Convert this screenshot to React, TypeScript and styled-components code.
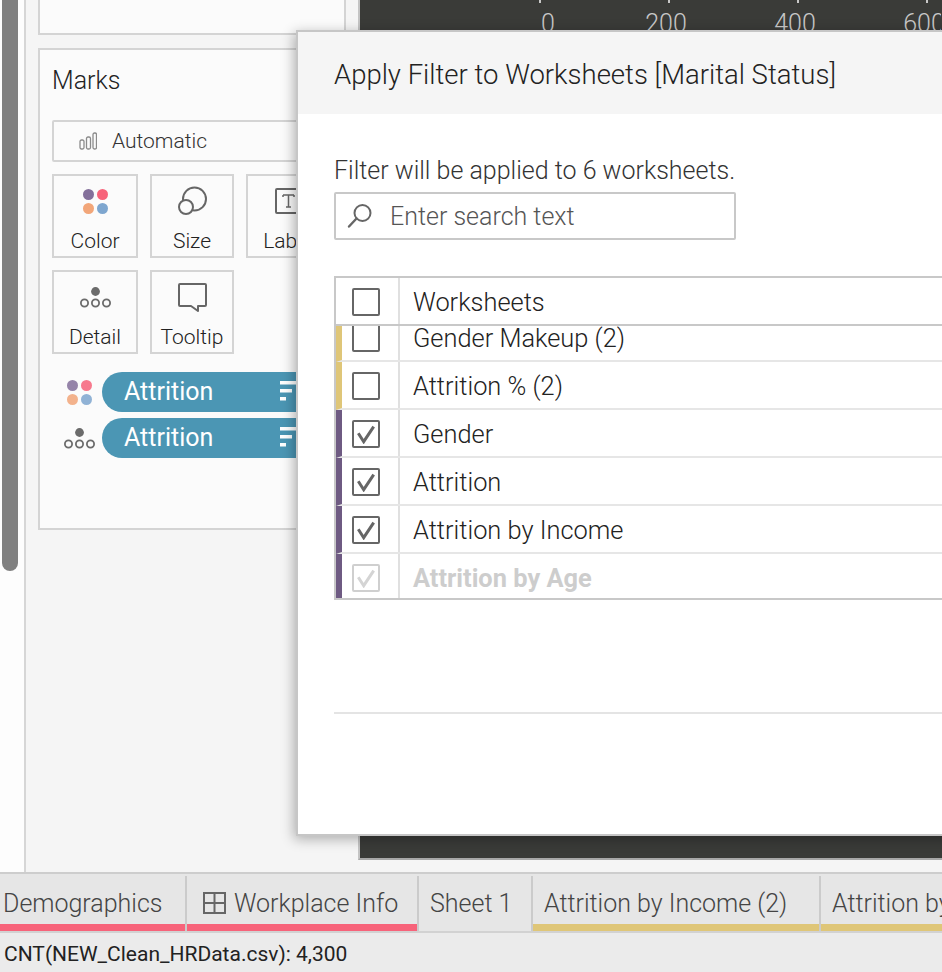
import { createGlobalStyle, styled } from 'styled-components'

const GlobalStyle = createGlobalStyle`
  html, body {
    margin: 0;
    padding: 0;
    background: #f5f5f5;
  }
  * {
    box-sizing: border-box;
  }
  #root {
    width: 942px;
    height: 972px;
    overflow: hidden;
  }
`

const Page = styled.div`
  position: relative;
  width: 942px;
  height: 972px;
  overflow: hidden;
  display: flex;
  flex-direction: column;
  font-family: Roboto, 'Liberation Sans', sans-serif;
  font-weight: 300;
  color: #222;
`

const Workspace = styled.div`
  height: 872px;
  display: flex;
  flex-shrink: 0;
`

const ScrollGutter = styled.div`
  width: 26px;
  flex-shrink: 0;
  padding-left: 2px;
  background: #fdfdfd;
  border-right: 2px solid #d6d6d6;
`

const ScrollThumb = styled.div`
  width: 16px;
  height: 571px;
  background: #808080;
  border-radius: 0 0 8px 8px;
`

const SidePanel = styled.div`
  width: 332px;
  flex-shrink: 0;
  padding: 0 12px 0 12px;
  display: flex;
  flex-direction: column;
  gap: 13px;
  background: #f5f5f5;
`

const Card = styled.div`
  width: 308px;
  background: #fbfbfb;
  border: 2px solid #d4d4d4;
`

const TopCard = styled(Card)`
  height: 35px;
  border-top: none;
`

const MarksCard = styled(Card)`
  height: 482px;
  padding: 0 12px;
  overflow: hidden;
`

const MarksTitle = styled.div`
  font-size: 25px;
  line-height: 30px;
  margin-top: 16px;
`

const MarkTypeSelect = styled.div`
  margin-top: 24px;
  width: 330px;
  height: 42px;
  display: flex;
  align-items: center;
  gap: 15px;
  padding-left: 25px;
  font-size: 21px;
  color: #333;
  background: #fbfbfb;
  border: 2px solid #d4d4d4;
  border-radius: 2px;
`

const MarkGrid = styled.div`
  margin-top: 12px;
  display: grid;
  grid-template-columns: 86px 84px 84px;
  grid-auto-rows: 84px;
  gap: 12px;
`

const MarkButton = styled.div`
  display: flex;
  flex-direction: column;
  align-items: center;
  border: 2px solid #d4d4d4;
  padding-top: 10px;
  font-size: 21px;
  line-height: 24px;
  color: #222;
  overflow: hidden;
`

const MarkIcon = styled.div`
  height: 30px;
  margin-bottom: 13px;
  display: flex;
  align-items: center;
  justify-content: center;
`

const PillList = styled.div`
  margin-top: 18px;
  display: flex;
  flex-direction: column;
  gap: 6px;
`

const PillRow = styled.div`
  display: flex;
  align-items: center;
  height: 40px;
`

const PillIcon = styled.div<{ $gap: number }>`
  width: 50px;
  flex-shrink: 0;
  padding-right: ${({ $gap }) => $gap}px;
  display: flex;
  justify-content: flex-end;
`

const Pill = styled.div`
  width: 218px;
  flex-shrink: 0;
  height: 40px;
  padding: 0 0 2px 22px;
  display: flex;
  align-items: center;
  justify-content: space-between;
  background: #4b96b4;
  color: #fff;
  font-size: 25px;
  font-weight: 400;
  border-radius: 20px 0 0 20px;
`

const ChartArea = styled.div`
  flex: 1;
  height: 860px;
  background: #3a3b38;
  border-left: 2px solid #c4c4c4;
  border-bottom: 2px solid #a8a8a8;
`

const Dialog = styled.div`
  position: absolute;
  left: 296px;
  top: 30px;
  width: 700px;
  height: 806px;
  background: #fff;
  border: 2px solid #c6c6c6;
  border-right: none;
  box-shadow: -2px 3px 12px rgba(0, 0, 0, 0.3);
`

const DialogHeader = styled.div`
  height: 82px;
  padding: 2px 0 0 36px;
  display: flex;
  align-items: center;
  background: #f5f5f5;
  font-size: 27.5px;
`

const DialogBody = styled.div`
  padding: 42px 0 0 36px;
`

const HintText = styled.div`
  font-size: 25px;
  line-height: 30px;
  height: 30px;
  color: #333;
`

const SearchBox = styled.div`
  margin-top: 6px;
  width: 402px;
  height: 48px;
  display: flex;
  align-items: center;
  padding-left: 11px;
  gap: 17px;
  border: 2px solid #c8c8c8;
  border-radius: 2px;
  font-size: 25px;
  color: #555;
`

const Table = styled.div`
  margin-top: 36px;
  width: 700px;
  border: 2px solid #c8c8c8;
  border-right: none;
`

const HeaderRow = styled.div`
  height: 48px;
  display: flex;
  border-bottom: 2px solid #c8c8c8;
`

const Row = styled.div<{ $band: string; $height: number; $last?: boolean }>`
  height: ${({ $height }) => $height}px;
  display: flex;
  overflow: hidden;
  border-left: 6px solid ${({ $band }) => $band};
  border-bottom: ${({ $last }) => ($last ? 'none' : '2px solid #e6e6e6')};
`

const CheckCell = styled.div<{ $band?: boolean }>`
  width: ${({ $band }) => ($band ? 58 : 64)}px;
  flex-shrink: 0;
  padding-left: ${({ $band }) => ($band ? 10 : 16)}px;
  padding-top: 10px;
  border-right: 2px solid #e0e0e0;
`

const LabelCell = styled.div<{ $muted?: boolean; $cropped?: boolean }>`
  padding-left: 13px;
  font-size: 25.400px;
  line-height: 30px;
  margin-top: ${({ $cropped }) => ($cropped ? -3 : 9)}px;
  color: ${({ $muted }) => ($muted ? '#cdcdcd' : '#222')};
  font-weight: ${({ $muted }) => ($muted ? 700 : 300)};
`

const Checkbox = styled.div<{ $muted?: boolean; $cropped?: boolean }>`
  width: 28px;
  height: 28px;
  display: flex;
  align-items: center;
  justify-content: center;
  margin-top: ${({ $cropped }) => ($cropped ? -12 : 0)}px;
  border: 2px solid ${({ $muted }) => ($muted ? '#cfcfcf' : '#666')};
  border-radius: 2px;
  background: #fff;
`

const DialogDivider = styled.div`
  margin-top: 112px;
  height: 2px;
  background: #e4e4e4;
`

const TabBar = styled.div`
  height: 61px;
  flex-shrink: 0;
  display: flex;
  background: #e6e6e6;
  border-top: 2px solid #cdcdcd;
  border-bottom: 2px solid #d2d2d2;
  overflow: hidden;
`

const Tab = styled.div<{ $width: number; $accent?: string; $padding: number }>`
  width: ${({ $width }) => $width}px;
  flex-shrink: 0;
  height: 55px;
  margin-top: 2px;
  padding: 0 0 1px ${({ $padding }) => $padding}px;
  display: flex;
  align-items: center;
  gap: 8px;
  white-space: nowrap;
  overflow: hidden;
  font-size: 25px;
  color: #444;
  border-right: 2px solid #cbcbcb;
  box-shadow: inset 0 -7px 0 ${({ $accent }) => $accent ?? 'transparent'};
`

const StatusBar = styled.div`
  flex: 1;
  padding: 2px 0 0 4px;
  display: flex;
  align-items: center;
  background: #ebebeb;
  font-size: 21px;
  font-weight: 400;
  color: #222;
`

const ColorDots = ({ pale }: { pale?: boolean }) => (
  <svg width="25" height="25" viewBox="0 0 25 25" opacity={pale ? 0.85 : 1}>
    <circle cx="5.500" cy="5.500" r="5.500" fill="#84709b" />
    <circle cx="19.500" cy="5.500" r="5.500" fill="#f7637a" />
    <circle cx="5.500" cy="19.500" r="5.500" fill="#f2a679" />
    <circle cx="19.500" cy="19.500" r="5.500" fill="#7ea6cf" />
  </svg>
)

const DetailDots = () => (
  <svg width="31" height="21" viewBox="0 0 31 21" fill="none" stroke="#6b6b6b" strokeWidth="1.800">
    <circle cx="15.500" cy="4.500" r="4.400" fill="#6b6b6b" stroke="none" />
    <circle cx="4.500" cy="16" r="3.600" />
    <circle cx="15.500" cy="16" r="3.600" />
    <circle cx="26.500" cy="16" r="3.600" />
  </svg>
)

const SizeIcon = () => (
  <svg width="30" height="30" viewBox="0 0 30 30" fill="none" stroke="#666" strokeWidth="2">
    <circle cx="17.500" cy="13" r="11.500" />
    <circle cx="9" cy="21" r="7" fill="#fbfbfb" />
  </svg>
)

const LabelIcon = () => (
  <svg width="30" height="30" viewBox="0 0 30 30" fill="none">
    <rect x="3" y="3" width="26" height="24" rx="1" stroke="#666" strokeWidth="2" />
    <path d="M10 9h11M15.500 9v12M13 21h5M10 9v2M21 9v2" stroke="#666" strokeWidth="1.500" />
  </svg>
)

const TooltipIcon = () => (
  <svg width="30" height="30" viewBox="0 0 30 30" fill="none" stroke="#666" strokeWidth="2" strokeLinejoin="round">
    <path d="M3 2h25a1 1 0 0 1 1 1v20a1 1 0 0 1-1 1h-7v5l-7-5H3a1 1 0 0 1-1-1V3a1 1 0 0 1 1-1z" />
  </svg>
)

const BarsIcon = () => (
  <svg width="18" height="18" viewBox="0 0 18 18" fill="none" stroke="#8b8b8b" strokeWidth="1.300">
    <rect x="1" y="8" width="4" height="9" rx="1.500" />
    <rect x="7.500" y="5" width="4" height="12" rx="1.500" />
    <rect x="14" y="1" width="3.500" height="16" rx="1.500" />
  </svg>
)

const GlyphWrap = styled.svg`
  margin-right: 20px;
`

const PillGlyph = () => (
  <GlyphWrap width="20" height="20" viewBox="0 0 20 20" fill="#fff">
    <rect x="0" y="0" width="20" height="3.500" />
    <rect x="0" y="8" width="12" height="3.500" />
    <rect x="0" y="16" width="6" height="3.500" />
  </GlyphWrap>
)

const SearchIcon = () => (
  <svg width="26" height="26" viewBox="0 0 26 26" fill="none" stroke="#666" strokeWidth="2">
    <circle cx="15.500" cy="10" r="8" />
    <path d="M9.500 15.500 2 23.500" strokeLinecap="round" strokeWidth="2.400" />
  </svg>
)

const CheckMark = ({ muted }: { muted?: boolean }) => (
  <svg width="20" height="20" viewBox="0 0 20 20" fill="none" stroke={muted ? '#d4d4d4' : '#666'} strokeWidth="3">
    <path d="M2.300 9.300 7.700 17.700 17.700 2.700" />
  </svg>
)

const DashboardIcon = () => (
  <svg width="23" height="22" viewBox="0 0 23 22" fill="none" stroke="#666" strokeWidth="2">
    <rect x="1" y="1" width="21" height="20" />
    <path d="M11.500 1v20M1 11h21" />
  </svg>
)

const Axis = () => (
  <svg width="581" height="30" viewBox="0 0 581 30" style={{ display: 'block' }}>
    {[
      { tick: 179, label: '0', at: 188 },
      { tick: 308, label: '200', at: 306 },
      { tick: 437, label: '400', at: 435 },
      { tick: 566, label: '600', at: 564 },
    ].map(({ tick, label, at }) => (
      <g key={label}>
        <rect x={tick} y="0" width="2" height="3" fill="#c8c8c8" />
        <text x={at} y="32" fill="#c8c8c8" fontSize="25" fontWeight="300" textAnchor="middle" fontFamily="Roboto, sans-serif">
          {label}
        </text>
      </g>
    ))}
  </svg>
)

const sheets = [
  { label: 'Gender Makeup (2)', band: '#dfc678', checked: false, height: 36, cropped: true },
  { label: 'Attrition % (2)', band: '#dfc678', checked: false, height: 48 },
  { label: 'Gender', band: '#6e5a82', checked: true, height: 48 },
  { label: 'Attrition', band: '#6e5a82', checked: true, height: 48 },
  { label: 'Attrition by Income', band: '#6e5a82', checked: true, height: 48 },
  { label: 'Attrition by Age', band: '#6e5a82', checked: true, height: 44, muted: true, last: true },
]

const tabs = [
  { label: 'Demographics', width: 187, padding: 3, accent: '#f7637a' },
  { label: 'Workplace Info', width: 232, padding: 16, accent: '#f7637a', dashboard: true },
  { label: 'Sheet 1', width: 114, padding: 11 },
  { label: 'Attrition by Income (2)', width: 288, padding: 11, accent: '#dfc678' },
  { label: 'Attrition by Age (2)', width: 240, padding: 11, accent: '#dfc678' },
]

const App = () => {
  return (
    <Page>
      <GlobalStyle />
      <Workspace>
        <ScrollGutter>
          <ScrollThumb />
        </ScrollGutter>
        <SidePanel>
          <TopCard />
          <MarksCard>
            <MarksTitle>Marks</MarksTitle>
            <MarkTypeSelect>
              <BarsIcon />
              Automatic
            </MarkTypeSelect>
            <MarkGrid>
              <MarkButton>
                <MarkIcon><ColorDots /></MarkIcon>
                Color
              </MarkButton>
              <MarkButton>
                <MarkIcon><SizeIcon /></MarkIcon>
                Size
              </MarkButton>
              <MarkButton>
                <MarkIcon><LabelIcon /></MarkIcon>
                Label
              </MarkButton>
              <MarkButton>
                <MarkIcon><DetailDots /></MarkIcon>
                Detail
              </MarkButton>
              <MarkButton>
                <MarkIcon><TooltipIcon /></MarkIcon>
                Tooltip
              </MarkButton>
            </MarkGrid>
            <PillList>
              <PillRow>
                <PillIcon $gap={10}><ColorDots pale /></PillIcon>
                <Pill>
                  Attrition
                  <PillGlyph />
                </Pill>
              </PillRow>
              <PillRow>
                <PillIcon $gap={7}><DetailDots /></PillIcon>
                <Pill>
                  Attrition
                  <PillGlyph />
                </Pill>
              </PillRow>
            </PillList>
          </MarksCard>
        </SidePanel>
        <ChartArea>
          <Axis />
        </ChartArea>
      </Workspace>

      <TabBar>
        {tabs.map((tab) => (
          <Tab key={tab.label} $width={tab.width} $padding={tab.padding} $accent={tab.accent}>
            {tab.dashboard && <DashboardIcon />}
            {tab.label}
          </Tab>
        ))}
      </TabBar>
      <StatusBar>CNT(NEW_Clean_HRData.csv): 4,300</StatusBar>

      <Dialog>
        <DialogHeader>Apply Filter to Worksheets [Marital Status]</DialogHeader>
        <DialogBody>
          <HintText>Filter will be applied to 6 worksheets.</HintText>
          <SearchBox>
            <SearchIcon />
            Enter search text
          </SearchBox>
          <Table>
            <HeaderRow>
              <CheckCell>
                <Checkbox />
              </CheckCell>
              <LabelCell>Worksheets</LabelCell>
            </HeaderRow>
            {sheets.map((sheet) => (
              <Row key={sheet.label} $band={sheet.band} $height={sheet.height} $last={sheet.last}>
                <CheckCell $band>
                  <Checkbox $muted={sheet.muted} $cropped={sheet.cropped}>
                    {sheet.checked && <CheckMark muted={sheet.muted} />}
                  </Checkbox>
                </CheckCell>
                <LabelCell $muted={sheet.muted} $cropped={sheet.cropped}>{sheet.label}</LabelCell>
              </Row>
            ))}
          </Table>
          <DialogDivider />
        </DialogBody>
      </Dialog>
    </Page>
  )
}

export default App
